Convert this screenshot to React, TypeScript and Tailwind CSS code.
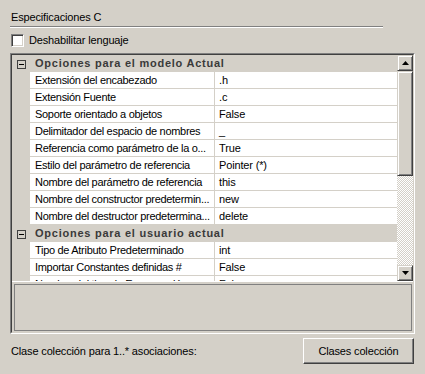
import React from 'react';

type Row = { name: string; value: string };

const modelo: Row[] = [
  { name: 'Extensión del encabezado', value: '.h' },
  { name: 'Extensión Fuente', value: '.c' },
  { name: 'Soporte orientado a objetos', value: 'False' },
  { name: 'Delimitador del espacio de nombres', value: '_' },
  { name: 'Referencia como parámetro de la o...', value: 'True' },
  { name: 'Estilo del parámetro de referencia', value: 'Pointer (*)' },
  { name: 'Nombre del parámetro de referencia', value: 'this' },
  { name: 'Nombre del constructor predetermin...', value: 'new' },
  { name: 'Nombre del destructor predetermina...', value: 'delete' },
];

const usuario: Row[] = [
  { name: 'Tipo de Atributo Predeterminado', value: 'int' },
  { name: 'Importar Constantes definidas #', value: 'False' },
  { name: 'Nombre del tipo de Enumeración', value: 'False' },
];

const Minus = () => (
  <svg width="9" height="9" viewBox="0 0 9 9" className="shrink-0">
    <rect x="0.5" y="0.5" width="8" height="8" fill="none" stroke="#404040" />
    <line x1="2" y1="4.5" x2="7" y2="4.5" stroke="#000" />
  </svg>
);

const Category = ({ title }: { title: string }) => (
  <div className="flex h-[17px] bg-[#d4d0c8]">
    <div className="ml-[5px] mt-[5px]">
      <Minus />
    </div>
    <div className="ml-[9px] leading-[17px] font-bold tracking-[0.75px] text-[#3a3a3a] whitespace-nowrap">
      {title}
    </div>
  </div>
);

const PropRow = ({ row }: { row: Row }) => (
  <div className="flex h-[17px]">
    <div className="w-[18px] bg-[#d4d0c8]" />
    <div className="flex flex-1 bg-white border-b border-[#d4d0c8]">
      <div className="w-[185px] pl-[5px] leading-[16px] tracking-[-0.3px] whitespace-nowrap overflow-hidden border-r border-[#d4d0c8]">
        {row.name}
      </div>
      <div className="flex-1 pl-[4px] leading-[16px] whitespace-nowrap">{row.value}</div>
    </div>
  </div>
);

const Arrow = ({ up }: { up?: boolean }) => (
  <svg width="7" height="4" viewBox="0 0 7 4">
    {up ? <polygon points="3.5,0 7,4 0,4" fill="#000" /> : <polygon points="0,0 7,0 3.5,4" fill="#000" />}
  </svg>
);

const raised =
  'border border-t-[#d4d0c8] border-l-[#d4d0c8] border-r-[#404040] border-b-[#404040] shadow-[inset_1px_1px_0_#ffffff,inset_-1px_-1px_0_#808080] bg-[#d4d0c8]';

export default function App() {
  return (
    <div className="w-[425px] h-[374px] bg-[#d4d0c8] font-['Liberation_Sans',Arial,sans-serif] text-[11px] tracking-[-0.15px] text-black overflow-hidden">
      <div className="pt-[11px] pl-[11px] leading-[13px]">Especificaciones C</div>
      <div className="ml-[10px] mt-[2px] w-[373px] h-[2px] border-t border-t-[#808080] border-b border-b-white" />

      <div className="mt-[6px] flex items-center h-[13px]">
        <div className="ml-[11px] w-[13px] h-[13px] bg-white border border-t-[#808080] border-l-[#808080] border-r-white border-b-white shadow-[inset_1px_1px_0_#404040,inset_-1px_-1px_0_#d4d0c8]" />
        <div className="ml-[5px] leading-[13px]">Deshabilitar lenguaje</div>
      </div>

      <div className="mt-[6px] ml-[10px] w-[405px] h-[281px] border border-t-[#808080] border-l-[#808080] border-r-white border-b-white">
        <div className="h-full border border-t-[#404040] border-l-[#404040] border-r-[#d4d0c8] border-b-[#d4d0c8] flex flex-col">
          <div className="flex h-[226px]">
            <div className="flex-1 overflow-hidden">
              <Category title="Opciones para el modelo Actual" />
              {modelo.map((r) => (
                <PropRow key={r.name} row={r} />
              ))}
              <Category title="Opciones para el usuario actual" />
              {usuario.map((r) => (
                <PropRow key={r.name} row={r} />
              ))}
            </div>
            <div className="w-[16px] flex flex-col">
              <div className={`h-[16px] flex items-center justify-center ${raised}`}>
                <Arrow up />
              </div>
              <div className={`h-[105px] ${raised}`} />
              <div className="flex-1 bg-[repeating-conic-gradient(#ffffff_0%_25%,#d4d0c8_0%_50%)] bg-[length:2px_2px]" />
              <div className={`h-[16px] flex items-center justify-center ${raised}`}>
                <Arrow />
              </div>
            </div>
          </div>
          <div className="h-[1px] bg-white" />
          <div className="mt-[2px] ml-[2px] mr-[1px] h-[47px] border border-[#808080]" />
        </div>
      </div>

      <div className="mt-[4px] flex items-center justify-between">
        <div className="ml-[11px] leading-[13px]">Clase colección para 1..* asociaciones:</div>
        <div className="mr-[11px] w-[111px] h-[26px] flex items-center justify-center border border-t-white border-l-white border-r-[#404040] border-b-[#404040] shadow-[inset_-1px_-1px_0_#808080]">
          Clases colección
        </div>
      </div>
    </div>
  );
}
